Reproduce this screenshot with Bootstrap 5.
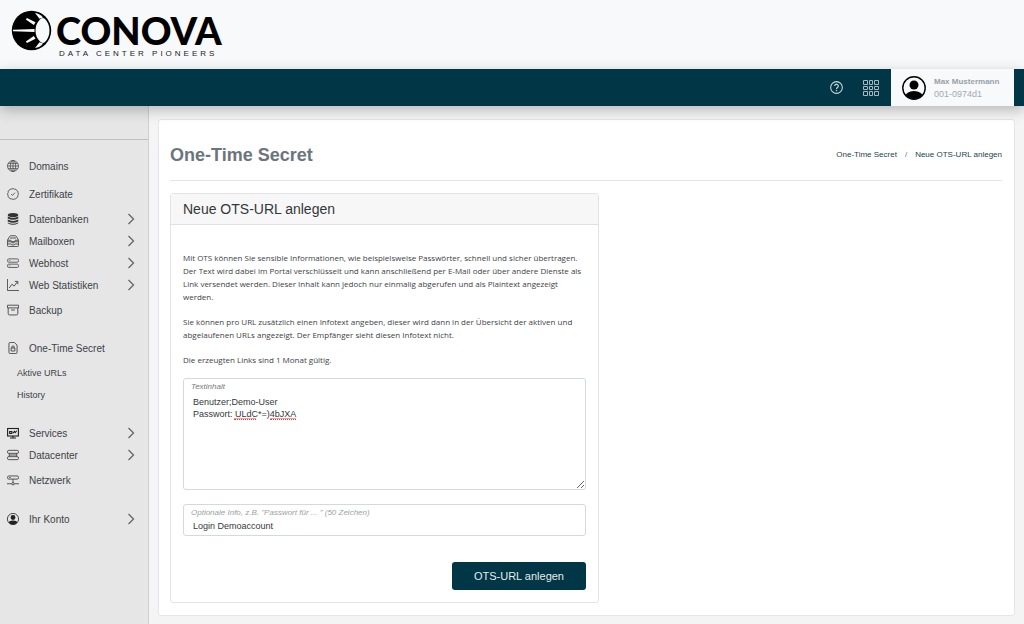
<!DOCTYPE html>
<html lang="de">
<head>
<meta charset="utf-8">
<meta name="viewport" content="width=device-width, initial-scale=1">
<title>One-Time Secret</title>
<link href="https://cdn.jsdelivr.net/npm/bootstrap@5.3.0/dist/css/bootstrap.min.css" rel="stylesheet">
<style>
  :root { --petrol: #003645; --rule: #dfe2e5; }
  body { font-family: "Liberation Sans", Arial, sans-serif; font-size: 10px; line-height: 13px; color: #3d4246; background: #f4f4f5; }
  a { color: inherit; text-decoration: none; }
  .brandbar { height: 69px; background: #f8f9fb; padding: 10px 11px; }
  .brand-name { font-family: Lato, sans-serif; font-weight: 900; font-size: 38px; line-height: 40px; color: #000; }
  .brand-tag { font-size: 8px; line-height: 8px; letter-spacing: 3px; color: #222; padding-left: 3px; }
  .topbar { height: 37px; background: var(--petrol); box-shadow: 0 4px 14px rgba(0,0,0,.25); z-index: 2; padding-right: 10px; }
  .icon-btn { background: none; border: 0; padding: 0; color: #cfd8db; line-height: 0; }
  .user-box { background: #f8f9fb; width: 123px; padding-left: 11px; color: #a3aab0; line-height: 12px; }
  .user-name { font-size: 8px; font-weight: bold; color: #97a1a8; }
  .user-id { font-size: 9px; }
  .sidebar { width: 149px; background: #e6e6e6; border-right: 1px solid #cfcfcf; }
  .side-top { height: 34px; border-bottom: 1px solid #bdc0c2; margin-bottom: 12px; }
  .side-link { height: 28px; padding: 0 13px 0 7px; }
  .side-link.tight, .side-sub { height: 22px; }
  .side-link svg:first-child { margin-right: 10px; }
  .side-sub { font-size: 9px; padding-left: 17px; }
  .side-gap { margin-top: 16px; }
  .side-group { padding: 10px 0 0; }
  .side-account { margin-top: 14px; }
  .main-area { padding: 13px 9px 8px; }
  .page-card { border: 1px solid #e6e6e8; border-radius: 3px; background: #fff; padding: 0 12px 12px 11px; }
  .page-head { height: 61px; border-bottom: 1px solid #e3e5e7; padding-top: 12px; }
  .page-title { font-size: 18px; font-weight: bold; color: #6b757d; }
  .crumbs { font-size: 8px; color: #1d4452; }
  .panel-col { width: calc(50% + 13px); margin-top: 12px; }
  .panel { border: 1px solid #e3e4e6; border-radius: 3px; }
  .panel-head { background: #f7f7f7; border-bottom: 1px solid #e0e1e3; font-size: 14px; line-height: 30px; padding: 0 12px; color: #33373a; }
  .panel-body { padding: 26px 12px 12px; }
  .intro p { font-family: "Open Sans", sans-serif; font-size: 8px; margin-bottom: 12px; }
  .field { border: 1px solid #d3d9de; border-radius: 3px; background: #fff; }
  .field + .field { margin-top: 14px; }
  .field label { font-size: 8px; line-height: 9px; font-style: italic; padding: 3px 7px 0; color: #757b80; }
  .field label.faint { color: #9a9fa3; }
  .field textarea, .field input { border: 0; outline: 0; background: none; font-size: 9px; line-height: 12px; padding: 0 9px; color: #33393d; }
  .field textarea { height: 98px; resize: vertical; padding-top: 5px; }
  .field input { height: 18px; }
  .typo { position: absolute; height: 2px; top: 39px; border-bottom: 1px dotted #e33; border-top: 1px solid #f2a0a0; }
  .submit-btn { --bs-btn-bg: var(--petrol); --bs-btn-color: #e6ecee; --bs-btn-hover-bg: #0a4a5b; --bs-btn-hover-color: #fff; --bs-btn-font-size: 11px; --bs-btn-border-radius: 3px; --bs-btn-padding-x: 21px; --bs-btn-padding-y: 0px; line-height: 26px; }
  .actions { margin-top: 26px; }
</style>
<script src="https://cdn.jsdelivr.net/npm/bootstrap@5.3.0/dist/js/bootstrap.bundle.min.js"></script>
</head>
<body class="d-flex flex-column min-vh-100">

<svg class="d-none">
  <symbol id="chev" viewBox="0 0 8 12"><path d="M1.500 1l5 5-5 5" fill="none" stroke="#666" stroke-width="1.300"/></symbol>
</svg>

<header class="brandbar">
  <a href="#" class="d-flex gap-1">
    <svg width="41" height="41" viewBox="0 0 41 41" aria-hidden="true">
      <circle cx="20.500" cy="20.500" r="19.700" fill="#000"/>
      <g fill="#f8f9fb">
        <path d="M29 9.500q2.500-2.500 5-.5 4.500 4.500 4.500 11.500t-4.500 11.500q-2.500 2-5-.5-4.500-4.500-4.500-11t4.500-11z"/>
        <path d="M2 19.700L23.500 19V22L2 21.300z"/>
        <path d="M16 8l8.500 4.200-1.700 2.800-8-5.500z"/><path d="M16 33l8.500-4.200-1.700-2.800-8 5.500z"/>
        <path d="M24 3q5 .5 8 4.500l-3.500 1.200z"/><path d="M24 38q5-.5 8-4.500l-3.500-1.200z"/>
      </g>
    </svg>
    <span class="d-flex flex-column">
      <span class="brand-name">CONOVA</span>
      <span class="brand-tag">DATA CENTER PIONEERS</span>
    </span>
  </a>
</header>

<nav class="topbar d-flex justify-content-end position-relative">
  <div class="d-flex align-items-center gap-3 me-2 pe-1">
    <button class="icon-btn me-1" type="button" aria-label="Hilfe">
      <svg width="13" height="13" viewBox="0 0 16 16" fill="none" stroke="currentColor"><circle cx="8" cy="8" r="7.200" stroke-width="1.300"/><path d="M5.800 6.200a2.200 2.200 0 1 1 3.400 1.800Q8 8.700 8 9.800" stroke-width="1.400"/><circle cx="8" cy="11.800" r=".5" fill="currentColor"/></svg>
    </button>
    <button class="icon-btn" type="button" aria-label="Anwendungen">
      <svg width="16" height="16" viewBox="0 0 16 16" fill="none" stroke="#a9b8bd"><path d="M.5.5h4v4h-4zM6.500.5h3v4h-3zM11.500.5h4v4h-4zM.5 6.500h4v3h-4zM6.500 6.500h3v3h-3zM11.500 6.500h4v3h-4zM.5 11.500h4v4h-4zM6.500 11.500h3v4h-3zM11.500 11.500h4v4h-4z"/></svg>
    </button>
  </div>
  <a href="#" class="user-box d-flex align-items-center gap-2">
    <svg width="24" height="24" viewBox="0 0 24 24"><clipPath id="uc"><circle cx="12" cy="12" r="11"/></clipPath><circle cx="12" cy="9" r="4.500"/><ellipse cx="12" cy="21" rx="9" ry="6" clip-path="url(#uc)"/><circle cx="12" cy="12" r="11.200" fill="none" stroke="#000" stroke-width="1.400"/></svg>
    <span class="d-flex flex-column"><span class="user-name">Max Mustermann</span><span class="user-id">001-0974d1</span></span>
  </a>
</nav>

<div class="d-flex flex-grow-1">
  <nav class="sidebar flex-shrink-0">
    <div class="side-top"></div>
    <a href="#" class="side-link d-flex align-items-center">
      <svg width="12" height="12" viewBox="0 0 16 16" fill="none" stroke="#444"><circle cx="8" cy="8" r="7.300"/><ellipse cx="8" cy="8" rx="3.600" ry="7.300"/><path d="M8 .5v15M.5 8h15M1.500 4.500h13M1.500 11.500h13"/></svg>Domains</a>
    <a href="#" class="side-link d-flex align-items-center">
      <svg width="12" height="12" viewBox="0 0 16 16" fill="none" stroke="#555" stroke-width="1.200"><path d="M8 .6l1.800 1.100 2.100-.1 1 1.900 1.800 1.100-.1 2.100L15.400 8l-1 1.800.1 2.100-1.800 1-1.100 1.800-2.100-.1L8 15.400l-1.800-1-2.100.1-1-1.800-1.800-1.100.1-2.100L.6 8l1-1.800-.1-2.100 1.800-1 1.100-1.800 2.100.1z"/><path d="M5.500 8.200l1.800 1.700 3.200-3.600"/></svg>Zertifikate</a>
    <a href="#" class="side-link tight d-flex align-items-center">
      <svg width="12" height="12" viewBox="0 0 16 16" fill="#333"><ellipse cx="8" cy="2.800" rx="7" ry="2.800"/><path d="M1 4.700q7 3.600 14 0v2.500q-7 3.800-14 0zM1 8.700q7 3.600 14 0v2.500q-7 3.800-14 0zM1 12.600q7 3.600 14 0v1q-7 4.200-14 0z"/></svg>Datenbanken<svg class="ms-auto" width="8" height="12"><use href="#chev"/></svg></a>
    <a href="#" class="side-link tight d-flex align-items-center">
      <svg width="12" height="12" viewBox="0 0 16 16" fill="none" stroke="#444" stroke-width="1.200"><path d="M.6 7l3-5.200Q4 1 5 1h6q1 0 1.400.8l3 5.200v2H10q0 1.600-2 1.600T6 9H.6zM.6 7H5q0 2 3 2t3-2h4.400M.6 9v5q0 1.400 1.400 1.400h12q1.400 0 1.400-1.400V9M1 12h4.500q.5 1.400 2.500 1.400t2.500-1.400H15M4 4h8"/></svg>Mailboxen<svg class="ms-auto" width="8" height="12"><use href="#chev"/></svg></a>
    <a href="#" class="side-link tight d-flex align-items-center">
      <svg width="12" height="12" viewBox="0 0 16 16" fill="none" stroke="#555" stroke-width="1.200"><rect x=".6" y="2.500" width="14.800" height="4.400" rx="1.800"/><rect x=".6" y="9.500" width="14.800" height="4.400" rx="1.800"/><path d="M2.500 4.700h2M2.500 11.700h2" stroke-width=".8"/></svg>Webhost<svg class="ms-auto" width="8" height="12"><use href="#chev"/></svg></a>
    <a href="#" class="side-link tight d-flex align-items-center">
      <svg width="12" height="12" viewBox="0 0 16 16" fill="none" stroke="#444" stroke-width="1.200"><path d="M.6 0v15.400H16M3 12l3.500-5 3 2.500L14 3.500M10.500 3.200h3.900V7"/></svg>Web Statistiken<svg class="ms-auto" width="8" height="12"><use href="#chev"/></svg></a>
    <a href="#" class="side-link d-flex align-items-center">
      <svg width="12" height="12" viewBox="0 0 16 16" fill="none" stroke="#444" stroke-width="1.200"><path d="M.6 1.600h14.800v3.600H.6zM1.600 5.200v7.600q0 1.800 1.800 1.800h9.200q1.800 0 1.800-1.800V5.200M5.500 8h5"/></svg>Backup</a>
    <div class="side-group">
      <a href="#" class="side-link d-flex align-items-center">
        <svg width="12" height="12" viewBox="0 0 16 16" fill="none" stroke="#444" stroke-width="1.200"><path d="M9.800.6H4.200Q2.600.6 2.600 2.200v11.600q0 1.600 1.600 1.600h7.600q1.600 0 1.600-1.600V4.200zM5.500 8h5v4h-5zM6.500 8V6.500q0-1.300 1.500-1.300T9.500 6.500V8"/></svg>One-Time Secret</a>
      <a href="#" class="side-sub d-flex align-items-center">Aktive URLs</a>
      <a href="#" class="side-sub d-flex align-items-center">History</a>
    </div>
    <a href="#" class="side-link tight side-gap d-flex align-items-center">
      <svg width="12" height="12" viewBox="0 0 16 16" fill="none" stroke="#222" stroke-width="1.500"><rect x=".8" y="2" width="14.400" height="10"/><path d="M4 14.600h8M8 12v2.500M3.500 6h3v2.500h-3zM8 8l2-2 1 1.500L13 5"/></svg>Services<svg class="ms-auto" width="8" height="12"><use href="#chev"/></svg></a>
    <a href="#" class="side-link tight d-flex align-items-center">
      <svg width="12" height="12" viewBox="0 0 16 16" fill="none" stroke="#444" stroke-width="1.200"><rect x=".6" y="1.800" width="14.800" height="4" rx="1.800"/><rect x=".6" y="10.200" width="14.800" height="4" rx="1.800"/><path d="M3 5.800v4.400M13 5.800v4.400M3 8h10"/></svg>Datacenter<svg class="ms-auto" width="8" height="12"><use href="#chev"/></svg></a>
    <a href="#" class="side-link d-flex align-items-center">
      <svg width="12" height="12" viewBox="0 0 16 16" fill="none" stroke="#444" stroke-width="1.200"><rect x=".6" y="2.600" width="14.800" height="4.200" rx="2"/><path d="M8 6.800v4.600M0 13h6.200M9.800 13H16M3 4.700h2"/><circle cx="8" cy="13" r="1.600"/></svg>Netzwerk</a>
    <a href="#" class="side-link tight side-account d-flex align-items-center">
      <svg width="12" height="12" viewBox="0 0 24 24" fill="#222"><circle cx="12" cy="9" r="4.800"/><ellipse cx="12" cy="21" rx="9" ry="6" clip-path="url(#uc)"/><circle cx="12" cy="12" r="11.200" fill="none" stroke="#222" stroke-width="1.600"/></svg>Ihr Konto<svg class="ms-auto" width="8" height="12"><use href="#chev"/></svg></a>
  </nav>

  <main class="main-area flex-grow-1 d-flex flex-column">
    <section class="page-card flex-grow-1 w-100">
      <div class="page-head d-flex justify-content-between align-items-center">
        <h1 class="page-title mb-0">One-Time Secret</h1>
        <div class="crumbs d-flex mb-1"><a href="#">One-Time Secret</a><span class="px-2 text-secondary">/</span><a href="#">Neue OTS-URL anlegen</a></div>
      </div>
      <div class="panel-col panel">
        <h2 class="panel-head mb-0">Neue OTS-URL anlegen</h2>
        <form class="panel-body">
          <div class="intro">
            <p>Mit OTS können Sie sensible Informationen, wie beispielsweise Passwörter, schnell und sicher übertragen.<br>Der Text wird dabei im Portal verschlüsselt und kann anschließend per E-Mail oder über andere Dienste als<br>Link versendet werden. Dieser Inhalt kann jedoch nur einmalig abgerufen und als Plaintext angezeigt<br>werden.</p>
            <p>Sie können pro URL zusätzlich einen Infotext angeben, dieser wird dann in der Übersicht der aktiven und<br>abgelaufenen URLs angezeigt. Der Empfänger sieht diesen Infotext nicht.</p>
            <p>Die erzeugten Links sind 1 Monat gültig.</p>
          </div>
          <div class="field d-flex flex-column position-relative">
            <label for="secret">Textinhalt</label>
            <textarea id="secret" spellcheck="false">Benutzer;Demo-User
Passwort: ULdC*=)4bJXA</textarea>
            <i class="typo" style="left:50px;width:22px"></i><i class="typo" style="left:86px;width:26px"></i>
          </div>
          <div class="field d-flex flex-column">
            <label for="info" class="faint">Optionale Info, z.B. "Passwort für ... " (50 Zeichen)</label>
            <input id="info" type="text" maxlength="50" value="Login Demoaccount">
          </div>
          <div class="actions text-end">
            <button type="submit" class="btn submit-btn">OTS-URL anlegen</button>
          </div>
        </form>
      </div>
    </section>
  </main>
</div>
</body>
</html>
